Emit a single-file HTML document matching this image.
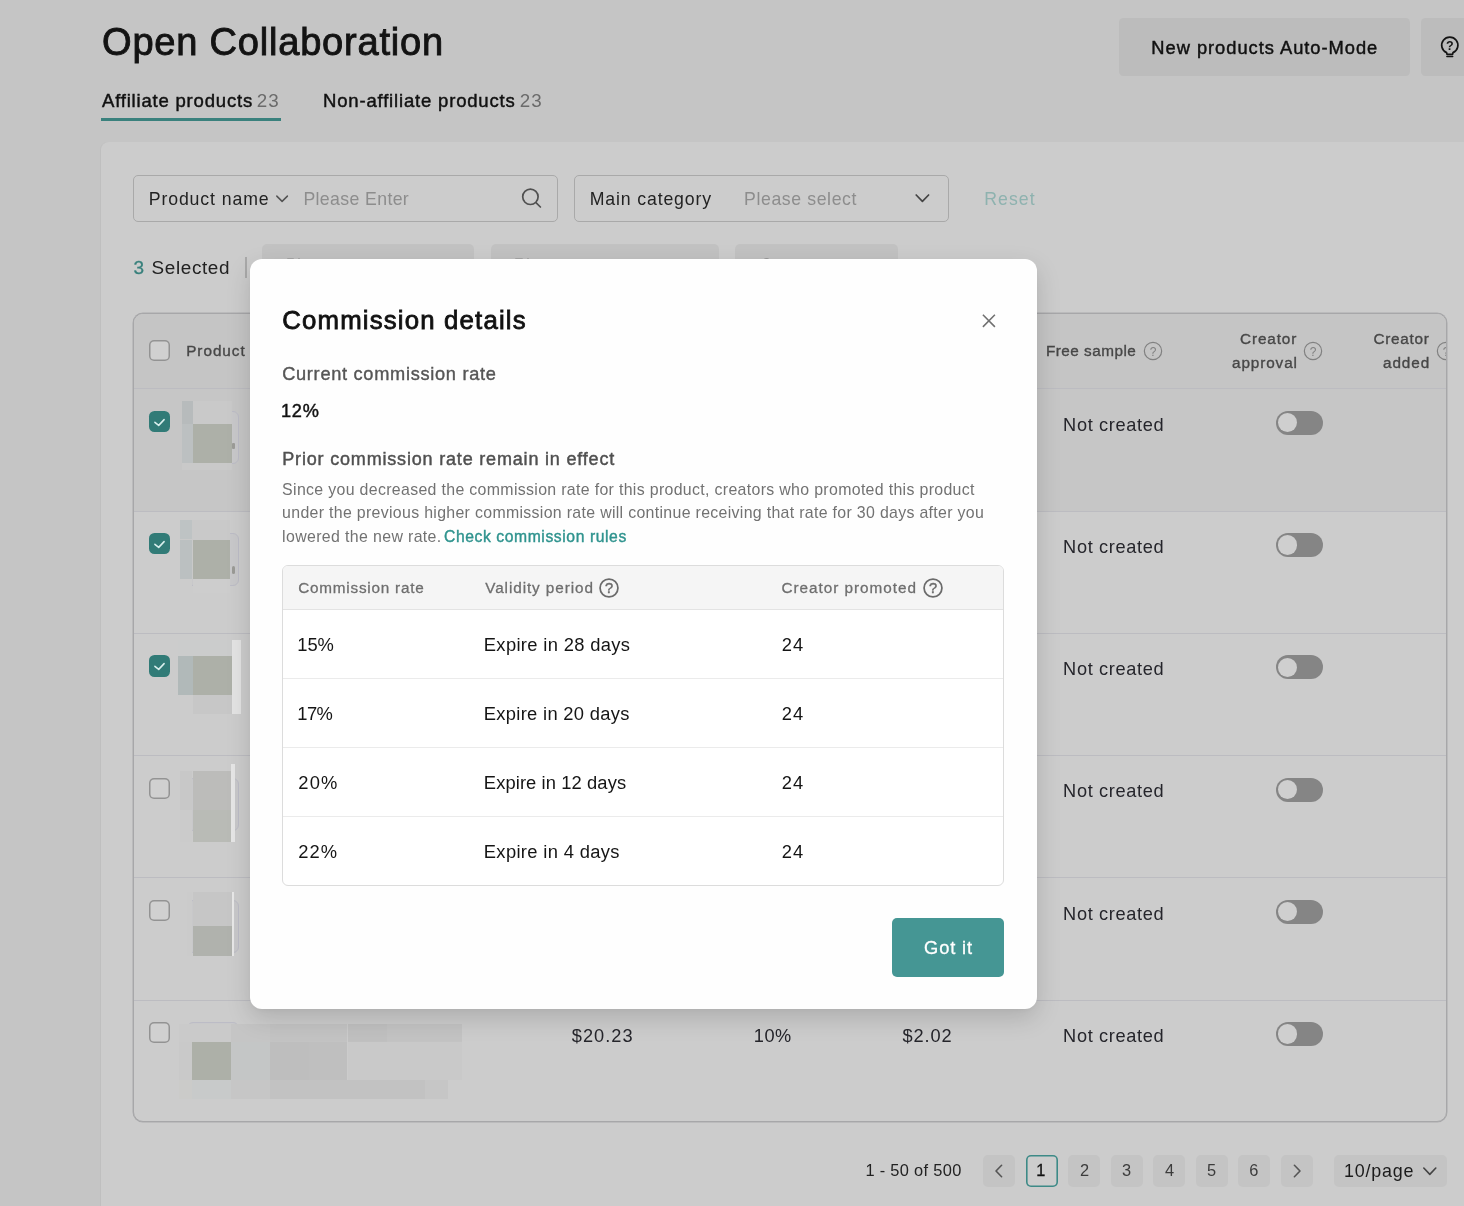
<!DOCTYPE html>
<html lang="en"><head><meta charset="utf-8"><title>Open Collaboration</title>
<style>
html,body{margin:0;padding:0}
body{width:1464px;height:1206px;overflow:hidden;position:relative;background:#c5c5c5;font-family:"Liberation Sans",Arial,sans-serif}
.a{position:absolute;box-sizing:border-box}
.t{position:absolute;white-space:nowrap;font-kerning:normal}
svg{position:absolute;overflow:visible}
.page{position:absolute;left:0;top:0;width:1464px;height:1206px;overflow:hidden;will-change:transform}
.inp{border:1px solid #a9a9a9;border-radius:5px}
.dis{background:#c2c2c2;border-radius:5px}
.pg{background:#c4c4c4;border-radius:5px}
.cb{border-radius:5px;background:#d0d0d0;box-shadow:inset 0 0 0 1.5px #939393}
.cbc{background:#317b77;border-radius:5.5px}
.tg{background:#858585;border-radius:12px}
.kn{background:#cfcfcf;border-radius:50%}
.th{border:1px solid #bcbcc6;border-radius:6px;background:#c8c8ca}
.hl{height:1px;background:#bcbcc1}
</style></head>
<body>
<div class="page">
<div class="a" style="left:101.00px;top:142.20px;width:1400.00px;height:1100.00px;background:#cccccc;border-top-left-radius:8px;box-shadow:-1px 0 1px rgba(0,0,0,.03);"></div>
<div class="a" style="left:1119.30px;top:17.60px;width:290.40px;height:58.00px;background:#bcbcbc;border-radius:4.5px;"></div>
<div class="a" style="left:1420.70px;top:17.60px;width:80.00px;height:58.00px;background:#bcbcbc;border-radius:4.5px;"></div>
<svg style="left:1438px;top:32.1px" width="24" height="27" viewBox="0 0 24 27">
<path d="M8.6 20.6 A8.1 8.1 0 1 1 15 20.6 L14.6 22.3 L9 22.3 Z" fill="none" stroke="#141414" stroke-width="1.7" stroke-linejoin="round"/>
<path d="M8.9 24.6 L14.7 24.6" stroke="#141414" stroke-width="1.5" stroke-linecap="round"/>
<text x="11.8" y="17.6" font-size="12.5" font-weight="700" text-anchor="middle" fill="#141414" font-family="Liberation Sans, Arial, sans-serif">?</text>
</svg>
<div class="a" style="left:101.00px;top:118.20px;width:180.00px;height:3.00px;background:#3a817d;"></div>
<div class="a inp" style="left:133px;top:174.5px;width:425px;height:47.5px"></div>
<div class="a inp" style="left:574px;top:174.5px;width:374.5px;height:47.5px"></div>
<svg style="left:270px;top:188px" width="24" height="20" viewBox="0 0 24 20"><path d="M6.8 8.1 L12.1 13.4 L17.4 8.1" fill="none" stroke="#525252" stroke-width="1.5" stroke-linecap="round" stroke-linejoin="round"/></svg>
<svg style="left:910px;top:188px" width="24" height="20" viewBox="0 0 24 20"><path d="M6.2 7 L12.4 13.4 L18.6 7" fill="none" stroke="#444" stroke-width="1.7" stroke-linecap="round" stroke-linejoin="round"/></svg>
<svg style="left:518px;top:184px" width="26" height="26" viewBox="0 0 26 26"><circle cx="12.4" cy="12.8" r="7.7" fill="none" stroke="#505050" stroke-width="1.7"/><path d="M18.2 18.8 L22.4 23" stroke="#505050" stroke-width="1.7" stroke-linecap="round"/></svg>
<div class="a" style="left:245.00px;top:257.00px;width:2.00px;height:20.50px;background:#a9a9a9;"></div>
<div class="a dis" style="left:262px;top:243.8px;width:212.3px;height:47px"></div>
<div class="a dis" style="left:490.5px;top:243.8px;width:228.5px;height:47px"></div>
<div class="a dis" style="left:735.2px;top:243.8px;width:162.8px;height:47px"></div>
<div class="a" style="left:286.80px;top:257.90px;width:7.30px;height:3.00px;background:#a6a6a6;border-radius:1px 1px 0 0;"></div>
<div class="a" style="left:298.00px;top:257.90px;width:2.10px;height:3.00px;background:#a9a9a9;"></div>
<div class="a" style="left:515.30px;top:257.90px;width:7.30px;height:3.00px;background:#a6a6a6;border-radius:1px 1px 0 0;"></div>
<div class="a" style="left:526.50px;top:257.90px;width:2.10px;height:3.00px;background:#a9a9a9;"></div>
<div class="a" style="left:763.20px;top:257.80px;width:7.00px;height:6.00px;background:#979797;border-radius:3.5px 3.5px 0 0;"></div>
<div class="a" style="left:133px;top:313px;width:1314px;height:809px;border:1px solid #a7a7a9;box-shadow:0 0 0 .5px #a9a9ab;border-radius:10px;overflow:hidden;background:#cccccc">
<div class="a" style="left:-134px;top:-314px;width:1464px;height:1206px">
<div class="a" style="left:134.00px;top:313.00px;width:1314.00px;height:76.00px;background:#c5c5c5;"></div>
<div class="a" style="left:134.00px;top:388.50px;width:1314.00px;height:122.25px;background:#c6c6c6;"></div>
<div class="a hl" style="left:134px;top:388.25px;width:1314px"></div>
<div class="a hl" style="left:134px;top:510.50px;width:1314px"></div>
<div class="a hl" style="left:134px;top:632.75px;width:1314px"></div>
<div class="a hl" style="left:134px;top:755.00px;width:1314px"></div>
<div class="a hl" style="left:134px;top:877.25px;width:1314px"></div>
<div class="a hl" style="left:134px;top:999.50px;width:1314px"></div>
<div class="a cb" style="left:149.1px;top:340.4px;width:21px;height:21px"></div>
<svg style="left:1141.20px;top:338.90px" width="24" height="24" viewBox="0 0 24 24"><circle cx="12" cy="12" r="8.65" fill="none" stroke="#818181" stroke-width="1.2"/><text x="12" y="17.15" font-size="12" font-weight="400" text-anchor="middle" fill="#818181" stroke="#818181" stroke-width="0" font-family="Liberation Sans, Arial, sans-serif">?</text></svg>
<svg style="left:1300.50px;top:338.90px" width="24" height="24" viewBox="0 0 24 24"><circle cx="12" cy="12" r="8.65" fill="none" stroke="#818181" stroke-width="1.2"/><text x="12" y="17.15" font-size="12" font-weight="400" text-anchor="middle" fill="#818181" stroke="#818181" stroke-width="0" font-family="Liberation Sans, Arial, sans-serif">?</text></svg>
<svg style="left:1433.80px;top:338.90px" width="24" height="24" viewBox="0 0 24 24"><circle cx="12" cy="12" r="8.65" fill="none" stroke="#818181" stroke-width="1.2"/><text x="12" y="17.15" font-size="12" font-weight="400" text-anchor="middle" fill="#818181" stroke="#818181" stroke-width="0" font-family="Liberation Sans, Arial, sans-serif">?</text></svg>
<div class="a cbc" style="left:149.1px;top:410.90px;width:21px;height:21.2px"></div>
<svg style="left:149.1px;top:410.90px" width="21" height="21" viewBox="0 0 21 21"><path d="M5.9 11.3 L9.7 14.4 L15.1 8.6" fill="none" stroke="#d9efed" stroke-width="1.55" stroke-linecap="round" stroke-linejoin="round"/></svg>
<div class="a th" style="left:186.5px;top:411.00px;width:52.5px;height:52.8px"></div>
<div class="a tg" style="left:1275.7px;top:410.80px;width:47.8px;height:24px"></div>
<div class="a kn" style="left:1277.9px;top:413.10px;width:19.3px;height:19.3px"></div>
<div class="a cbc" style="left:149.1px;top:533.15px;width:21px;height:21.2px"></div>
<svg style="left:149.1px;top:533.15px" width="21" height="21" viewBox="0 0 21 21"><path d="M5.9 11.3 L9.7 14.4 L15.1 8.6" fill="none" stroke="#d9efed" stroke-width="1.55" stroke-linecap="round" stroke-linejoin="round"/></svg>
<div class="a th" style="left:186.5px;top:533.25px;width:52.5px;height:52.8px"></div>
<div class="a tg" style="left:1275.7px;top:533.05px;width:47.8px;height:24px"></div>
<div class="a kn" style="left:1277.9px;top:535.35px;width:19.3px;height:19.3px"></div>
<div class="a cbc" style="left:149.1px;top:655.40px;width:21px;height:21.2px"></div>
<svg style="left:149.1px;top:655.40px" width="21" height="21" viewBox="0 0 21 21"><path d="M5.9 11.3 L9.7 14.4 L15.1 8.6" fill="none" stroke="#d9efed" stroke-width="1.55" stroke-linecap="round" stroke-linejoin="round"/></svg>
<div class="a th" style="left:186.5px;top:655.50px;width:52.5px;height:52.8px"></div>
<div class="a tg" style="left:1275.7px;top:655.30px;width:47.8px;height:24px"></div>
<div class="a kn" style="left:1277.9px;top:657.60px;width:19.3px;height:19.3px"></div>
<div class="a cb" style="left:149.1px;top:778.15px;width:21px;height:21px"></div>
<div class="a th" style="left:186.5px;top:777.75px;width:52.5px;height:52.8px"></div>
<div class="a tg" style="left:1275.7px;top:777.55px;width:47.8px;height:24px"></div>
<div class="a kn" style="left:1277.9px;top:779.85px;width:19.3px;height:19.3px"></div>
<div class="a cb" style="left:149.1px;top:900.40px;width:21px;height:21px"></div>
<div class="a th" style="left:186.5px;top:900.00px;width:52.5px;height:52.8px"></div>
<div class="a tg" style="left:1275.7px;top:899.80px;width:47.8px;height:24px"></div>
<div class="a kn" style="left:1277.9px;top:902.10px;width:19.3px;height:19.3px"></div>
<div class="a cb" style="left:149.1px;top:1022.45px;width:21px;height:21px"></div>
<div class="a th" style="left:186.5px;top:1022.25px;width:52.5px;height:52.8px"></div>
<div class="a tg" style="left:1275.7px;top:1022.05px;width:47.8px;height:24px"></div>
<div class="a kn" style="left:1277.9px;top:1024.35px;width:19.3px;height:19.3px"></div>
<div class="a" style="left:232.30px;top:443.30px;width:2.40px;height:5.60px;background:#9c9c98;border-radius:1px;"></div>
<div class="a" style="left:231.50px;top:565.50px;width:3.50px;height:8.00px;background:#9a9a96;border-radius:2px;"></div>
<div class="a" style="left:182.00px;top:401.00px;width:50.00px;height:68.60px;background:#c9c9c9;"></div>
<div class="a" style="left:182.00px;top:401.00px;width:11.00px;height:23.00px;background:#b7bbbc;"></div>
<div class="a" style="left:182.00px;top:424.00px;width:11.00px;height:39.00px;background:#bcc0c1;"></div>
<div class="a" style="left:193.00px;top:424.00px;width:39.00px;height:39.00px;background:#adb0a8;"></div>
<div class="a" style="left:180.10px;top:520.20px;width:49.90px;height:58.80px;background:#c9c9c9;"></div>
<div class="a" style="left:180.10px;top:579.00px;width:12.40px;height:13.70px;background:#cccccc;"></div>
<div class="a" style="left:192.50px;top:579.00px;width:37.50px;height:13.70px;background:#cdcdcd;"></div>
<div class="a" style="left:180.10px;top:520.20px;width:12.40px;height:19.30px;background:#bec3c4;"></div>
<div class="a" style="left:180.10px;top:539.50px;width:12.40px;height:39.20px;background:#bbc0c1;"></div>
<div class="a" style="left:192.50px;top:539.50px;width:37.50px;height:39.20px;background:#adb0a8;"></div>
<div class="a" style="left:178.00px;top:639.80px;width:54.00px;height:16.20px;background:#cbcccc;"></div>
<div class="a" style="left:178.00px;top:694.50px;width:14.50px;height:19.30px;background:#cccccc;"></div>
<div class="a" style="left:192.50px;top:694.50px;width:39.50px;height:19.30px;background:#c7c7c7;"></div>
<div class="a" style="left:178.00px;top:656.00px;width:14.50px;height:38.50px;background:#b1b9b9;"></div>
<div class="a" style="left:192.50px;top:656.00px;width:39.50px;height:38.50px;background:#adb0a8;"></div>
<div class="a" style="left:231.90px;top:639.80px;width:9.10px;height:74.10px;background:#e3e3e3;"></div>
<div class="a" style="left:180.10px;top:771.00px;width:12.40px;height:38.70px;background:#c8c8c8;"></div>
<div class="a" style="left:180.10px;top:809.70px;width:12.40px;height:32.20px;background:#cbcbcb;"></div>
<div class="a" style="left:192.50px;top:771.00px;width:38.50px;height:38.70px;background:#bcbcba;"></div>
<div class="a" style="left:192.50px;top:809.70px;width:38.50px;height:32.20px;background:#b9bbb6;"></div>
<div class="a" style="left:231.00px;top:763.90px;width:4.10px;height:78.00px;background:#e6e6e6;"></div>
<div class="a" style="left:187.10px;top:892.20px;width:5.40px;height:63.60px;background:#cbcbcb;"></div>
<div class="a" style="left:192.50px;top:892.20px;width:39.70px;height:33.50px;background:#c6c6c6;"></div>
<div class="a" style="left:192.50px;top:925.70px;width:39.70px;height:30.10px;background:#b0b2ad;"></div>
<div class="a" style="left:232.20px;top:892.20px;width:1.80px;height:63.60px;background:#e8e8e8;"></div>
<div class="a" style="left:178.50px;top:1023.70px;width:52.40px;height:17.90px;background:#cacaca;"></div>
<div class="a" style="left:230.90px;top:1023.70px;width:39.00px;height:17.90px;background:#c5c5c5;"></div>
<div class="a" style="left:269.90px;top:1023.70px;width:77.60px;height:17.90px;background:#c3c3c3;"></div>
<div class="a" style="left:347.50px;top:1023.70px;width:39.00px;height:17.90px;background:#c0c0c0;"></div>
<div class="a" style="left:386.50px;top:1023.70px;width:75.30px;height:17.90px;background:#c3c3c3;"></div>
<div class="a" style="left:178.50px;top:1041.60px;width:13.70px;height:38.70px;background:#c9c9c9;"></div>
<div class="a" style="left:192.20px;top:1041.60px;width:38.70px;height:38.70px;background:#adb0a8;"></div>
<div class="a" style="left:230.90px;top:1041.60px;width:39.00px;height:38.70px;background:#c4c6c6;"></div>
<div class="a" style="left:269.90px;top:1041.60px;width:38.90px;height:38.70px;background:#bebebe;"></div>
<div class="a" style="left:308.80px;top:1041.60px;width:38.70px;height:38.70px;background:#bfbfbf;"></div>
<div class="a" style="left:347.50px;top:1041.60px;width:114.30px;height:38.70px;background:#c9c9c9;"></div>
<div class="a" style="left:178.50px;top:1080.30px;width:13.70px;height:19.20px;background:#cbcbc9;"></div>
<div class="a" style="left:192.20px;top:1080.30px;width:38.70px;height:19.20px;background:#c8caca;"></div>
<div class="a" style="left:230.90px;top:1080.30px;width:39.00px;height:19.20px;background:#c6c6c6;"></div>
<div class="a" style="left:269.90px;top:1080.30px;width:155.30px;height:19.20px;background:#c2c2c2;"></div>
<div class="a" style="left:425.20px;top:1080.30px;width:22.80px;height:19.20px;background:#c6c6c6;"></div>
</div></div>
<div class="a pg" style="left:983.25px;top:1155px;width:31.8px;height:31.6px"></div>
<div class="a pg" style="left:1068.25px;top:1155px;width:31.8px;height:31.6px"></div>
<div class="a pg" style="left:1110.75px;top:1155px;width:31.8px;height:31.6px"></div>
<div class="a pg" style="left:1153.25px;top:1155px;width:31.8px;height:31.6px"></div>
<div class="a pg" style="left:1195.75px;top:1155px;width:31.8px;height:31.6px"></div>
<div class="a pg" style="left:1238.25px;top:1155px;width:31.8px;height:31.6px"></div>
<div class="a pg" style="left:1280.75px;top:1155px;width:31.8px;height:31.6px"></div>
<div class="a" style="left:1025.75px;top:1155px;width:32.2px;height:31.6px;box-shadow:inset 0 0 0 1.6px #3d8a87;border-radius:5px;background:#cdcdcd"></div>
<div class="a pg" style="left:1334.2px;top:1154.8px;width:112.9px;height:31.8px"></div>
<svg style="left:987px;top:1159px" width="24" height="24" viewBox="0 0 24 24"><path d="M14.6 6.3 L9 12 L14.6 17.7" fill="none" stroke="#555" stroke-width="1.6" stroke-linecap="round" stroke-linejoin="round"/></svg>
<svg style="left:1284.6px;top:1159px" width="24" height="24" viewBox="0 0 24 24"><path d="M9.4 6.3 L15 12 L9.4 17.7" fill="none" stroke="#555" stroke-width="1.6" stroke-linecap="round" stroke-linejoin="round"/></svg>
<svg style="left:1418px;top:1160px" width="24" height="24" viewBox="0 0 24 24"><path d="M5.8 8 L11.8 14.4 L17.8 8" fill="none" stroke="#444" stroke-width="1.6" stroke-linecap="round" stroke-linejoin="round"/></svg>
<span class="t" style="left:102.00px;top:17.00px;font-size:38.1px;line-height:50px;color:#131313;-webkit-text-stroke:0.9px #131313;letter-spacing:0.765px;">Open Collaboration</span>
<span class="t" style="left:102.00px;top:89.00px;font-size:18.55px;line-height:24px;color:#111;-webkit-text-stroke:0.45px #111;letter-spacing:0.794px;">Affiliate products</span>
<span class="t" style="left:256.75px;top:89.00px;font-size:18.8px;line-height:24px;color:#6b6b6b;letter-spacing:1.128px;">23</span>
<span class="t" style="left:323.00px;top:89.00px;font-size:18.55px;line-height:24px;color:#111;-webkit-text-stroke:0.45px #111;letter-spacing:0.810px;">Non-affiliate products</span>
<span class="t" style="left:519.75px;top:89.00px;font-size:18.8px;line-height:24px;color:#6b6b6b;letter-spacing:1.128px;">23</span>
<span class="t" style="left:1151.30px;top:36.00px;font-size:18.3px;line-height:24px;color:#111;-webkit-text-stroke:0.45px #111;letter-spacing:0.986px;">New products Auto-Mode</span>
<span class="t" style="left:148.70px;top:188.00px;font-size:17.7px;line-height:23px;color:#222;letter-spacing:0.891px;">Product name</span>
<span class="t" style="left:303.40px;top:188.00px;font-size:17.7px;line-height:23px;color:#8d8d8d;letter-spacing:0.373px;">Please Enter</span>
<span class="t" style="left:589.70px;top:188.00px;font-size:17.7px;line-height:23px;color:#222;letter-spacing:0.858px;">Main category</span>
<span class="t" style="left:744.00px;top:188.00px;font-size:17.7px;line-height:23px;color:#8d8d8d;letter-spacing:0.604px;">Please select</span>
<span class="t" style="left:984.20px;top:188.00px;font-size:17.7px;line-height:23px;color:#8eb2af;letter-spacing:1.062px;">Reset</span>
<span class="t" style="left:133.62px;top:255.00px;font-size:19px;line-height:25px;color:#38807c;-webkit-text-stroke:0.3px #38807c;">3</span>
<span class="t" style="left:151.50px;top:255.00px;font-size:18.9px;line-height:25px;color:#222;letter-spacing:0.643px;">Selected</span>
<span class="t" style="left:310.00px;top:258.00px;font-size:17.7px;line-height:23px;color:#9a9a9a;letter-spacing:-1.263px;">Edit commission rate</span>
<span class="t" style="left:538.00px;top:258.00px;font-size:17.7px;line-height:23px;color:#9a9a9a;letter-spacing:-0.105px;">Edit sample settings</span>
<span class="t" style="left:783.00px;top:258.00px;font-size:17.7px;line-height:23px;color:#9a9a9a;letter-spacing:-0.727px;">Set approval</span>
<span class="t" style="left:186.20px;top:341.00px;font-size:15.3px;line-height:20px;color:#474747;-webkit-text-stroke:0.35px #474747;letter-spacing:0.967px;">Product</span>
<span class="t" style="left:1045.90px;top:341.00px;font-size:15.3px;line-height:20px;color:#474747;-webkit-text-stroke:0.35px #474747;letter-spacing:0.490px;">Free sample</span>
<span class="t" style="left:1240.00px;top:329.00px;font-size:15.3px;line-height:20px;color:#474747;-webkit-text-stroke:0.35px #474747;letter-spacing:0.883px;">Creator</span>
<span class="t" style="left:1232.00px;top:353.00px;font-size:15.3px;line-height:20px;color:#474747;-webkit-text-stroke:0.35px #474747;letter-spacing:0.900px;">approval</span>
<span class="t" style="left:1373.50px;top:329.00px;font-size:15.3px;line-height:20px;color:#474747;-webkit-text-stroke:0.35px #474747;letter-spacing:0.733px;">Creator</span>
<span class="t" style="left:1383.00px;top:353.00px;font-size:15.3px;line-height:20px;color:#474747;-webkit-text-stroke:0.35px #474747;letter-spacing:0.918px;">added</span>
<span class="t" style="left:1063.10px;top:413.00px;font-size:18.2px;line-height:24px;color:#25252b;letter-spacing:0.650px;">Not created</span>
<span class="t" style="left:1063.10px;top:535.00px;font-size:18.2px;line-height:24px;color:#25252b;letter-spacing:0.650px;">Not created</span>
<span class="t" style="left:1063.10px;top:657.00px;font-size:18.2px;line-height:24px;color:#25252b;letter-spacing:0.650px;">Not created</span>
<span class="t" style="left:1063.10px;top:779.00px;font-size:18.2px;line-height:24px;color:#25252b;letter-spacing:0.650px;">Not created</span>
<span class="t" style="left:1063.10px;top:902.00px;font-size:18.2px;line-height:24px;color:#25252b;letter-spacing:0.650px;">Not created</span>
<span class="t" style="left:1063.10px;top:1024.00px;font-size:18.2px;line-height:24px;color:#25252b;letter-spacing:0.650px;">Not created</span>
<span class="t" style="left:571.80px;top:1024.00px;font-size:18.2px;line-height:24px;color:#25252b;letter-spacing:1.040px;">$20.23</span>
<span class="t" style="left:753.80px;top:1024.00px;font-size:18.2px;line-height:24px;color:#25252b;letter-spacing:0.500px;">10%</span>
<span class="t" style="left:902.50px;top:1024.00px;font-size:18.2px;line-height:24px;color:#25252b;letter-spacing:0.875px;">$2.02</span>
<span class="t" style="left:865.40px;top:1160.00px;font-size:16.4px;line-height:21px;color:#222;letter-spacing:0.321px;">1 - 50 of 500</span>
<span class="t" style="left:1344.10px;top:1160.00px;font-size:17.9px;line-height:23px;color:#1b1b1b;letter-spacing:0.783px;">10/page</span>
<span class="t" style="left:1036.25px;top:1160.00px;font-size:16.3px;line-height:21px;color:#111;-webkit-text-stroke:0.3px #111;">1</span>
<span class="t" style="left:1079.88px;top:1160.00px;font-size:16.4px;line-height:21px;color:#3c3c3c;">2</span>
<span class="t" style="left:1121.88px;top:1160.00px;font-size:16.4px;line-height:21px;color:#3c3c3c;">3</span>
<span class="t" style="left:1164.88px;top:1160.00px;font-size:16.4px;line-height:21px;color:#3c3c3c;">4</span>
<span class="t" style="left:1206.90px;top:1160.00px;font-size:16.4px;line-height:21px;color:#3c3c3c;">5</span>
<span class="t" style="left:1249.20px;top:1160.00px;font-size:16.4px;line-height:21px;color:#3c3c3c;">6</span>
</div>
<div class="page">
<div class="a" style="left:250px;top:259.3px;width:787px;height:749.5px;background:#fefefe;border-radius:12px;box-shadow:0 9px 24px rgba(0,0,0,.15),0 2px 5px rgba(0,0,0,.03)"></div>
<div class="a" style="left:282px;top:565px;width:722.4px;height:320.8px;border:1px solid #dcdcdc;border-radius:6px;overflow:hidden;background:#fff"><div class="a" style="left:0;top:0;width:722px;height:43.6px;background:#f5f5f5;border-bottom:1px solid #e3e3e3"></div><div class="a" style="left:0;top:112.2px;width:722px;height:1px;background:#ebebeb"></div><div class="a" style="left:0;top:181.2px;width:722px;height:1px;background:#ebebeb"></div><div class="a" style="left:0;top:250.2px;width:722px;height:1px;background:#ebebeb"></div></div>
<svg style="left:596.85px;top:575.60px" width="24" height="24" viewBox="0 0 24 24"><circle cx="12" cy="12" r="8.93" fill="none" stroke="#6b6b6b" stroke-width="1.75"/><text x="12" y="17.4" font-size="14.6" font-weight="400" text-anchor="middle" fill="#6b6b6b" stroke="#6b6b6b" stroke-width="0.45" font-family="Liberation Sans, Arial, sans-serif">?</text></svg>
<svg style="left:921.00px;top:575.60px" width="24" height="24" viewBox="0 0 24 24"><circle cx="12" cy="12" r="8.93" fill="none" stroke="#6b6b6b" stroke-width="1.75"/><text x="12" y="17.4" font-size="14.6" font-weight="400" text-anchor="middle" fill="#6b6b6b" stroke="#6b6b6b" stroke-width="0.45" font-family="Liberation Sans, Arial, sans-serif">?</text></svg>
<svg style="left:976.7px;top:308.5px" width="24" height="24" viewBox="0 0 24 24"><path d="M5.9 5.8 L17.9 17.9 M17.9 5.8 L5.9 17.9" fill="none" stroke="#707070" stroke-width="1.55" stroke-linecap="butt"/></svg>
<div class="a" style="left:892px;top:918.2px;width:112.1px;height:58.5px;background:#459694;border-radius:5px"></div>
<span class="t" style="left:282.20px;top:303.00px;font-size:25.8px;line-height:34px;color:#111;-webkit-text-stroke:0.8px #111;letter-spacing:1.165px;">Commission details</span>
<span class="t" style="left:282.20px;top:362.00px;font-size:18.2px;line-height:24px;color:#565656;-webkit-text-stroke:0.4px #565656;letter-spacing:0.707px;">Current commission rate</span>
<span class="t" style="left:281.02px;top:399.00px;font-size:18.2px;line-height:24px;color:#111;-webkit-text-stroke:0.45px #111;letter-spacing:0.725px;">12%</span>
<span class="t" style="left:282.30px;top:448.00px;font-size:18.0px;line-height:23px;color:#505050;-webkit-text-stroke:0.45px #505050;letter-spacing:0.816px;">Prior commission rate remain in effect</span>
<span class="t" style="left:282.10px;top:479.00px;font-size:15.9px;line-height:21px;color:#727272;letter-spacing:0.329px;">Since you decreased the commission rate for this product, creators who promoted this product</span>
<span class="t" style="left:282.10px;top:502.00px;font-size:15.9px;line-height:21px;color:#727272;letter-spacing:0.317px;">under the previous higher commission rate will continue receiving that rate for 30 days after you</span>
<span class="t" style="left:282.10px;top:526.00px;font-size:15.9px;line-height:21px;color:#727272;letter-spacing:0.360px;">lowered the new rate.</span>
<span class="t" style="left:444.00px;top:527.00px;font-size:15.7px;line-height:20px;color:#2f938e;-webkit-text-stroke:0.4px #2f938e;letter-spacing:0.583px;">Check commission rules</span>
<span class="t" style="left:298.20px;top:578.00px;font-size:15.3px;line-height:20px;color:#6e6e6e;-webkit-text-stroke:0.28px #6e6e6e;letter-spacing:0.771px;">Commission rate</span>
<span class="t" style="left:485.20px;top:578.00px;font-size:15.3px;line-height:20px;color:#6e6e6e;-webkit-text-stroke:0.28px #6e6e6e;letter-spacing:0.914px;">Validity period</span>
<span class="t" style="left:781.50px;top:578.00px;font-size:15.3px;line-height:20px;color:#6e6e6e;-webkit-text-stroke:0.28px #6e6e6e;letter-spacing:0.967px;">Creator promoted</span>
<span class="t" style="left:297.27px;top:633.00px;font-size:18.35px;line-height:24px;color:#151515;letter-spacing:-0.025px;">15%</span>
<span class="t" style="left:483.80px;top:633.00px;font-size:18.35px;line-height:24px;color:#151515;letter-spacing:0.341px;">Expire in 28 days</span>
<span class="t" style="left:781.65px;top:633.00px;font-size:18.35px;line-height:24px;color:#151515;letter-spacing:1.101px;">24</span>
<span class="t" style="left:297.25px;top:702.00px;font-size:18.35px;line-height:24px;color:#151515;letter-spacing:-0.550px;">17%</span>
<span class="t" style="left:483.80px;top:702.00px;font-size:18.35px;line-height:24px;color:#151515;letter-spacing:0.306px;">Expire in 20 days</span>
<span class="t" style="left:781.65px;top:702.00px;font-size:18.35px;line-height:24px;color:#151515;letter-spacing:1.101px;">24</span>
<span class="t" style="left:298.35px;top:771.00px;font-size:18.35px;line-height:24px;color:#151515;letter-spacing:1.101px;">20%</span>
<span class="t" style="left:483.80px;top:771.00px;font-size:18.35px;line-height:24px;color:#151515;letter-spacing:0.100px;">Expire in 12 days</span>
<span class="t" style="left:781.65px;top:771.00px;font-size:18.35px;line-height:24px;color:#151515;letter-spacing:1.101px;">24</span>
<span class="t" style="left:298.25px;top:840.00px;font-size:18.35px;line-height:24px;color:#151515;letter-spacing:1.101px;">22%</span>
<span class="t" style="left:483.80px;top:840.00px;font-size:18.35px;line-height:24px;color:#151515;letter-spacing:0.340px;">Expire in 4 days</span>
<span class="t" style="left:781.65px;top:840.00px;font-size:18.35px;line-height:24px;color:#151515;letter-spacing:1.101px;">24</span>
<span class="t" style="left:924.10px;top:936.00px;font-size:18.3px;line-height:24px;color:#ffffff;-webkit-text-stroke:0.3px #ffffff;letter-spacing:0.840px;">Got it</span>
</div>
</body></html>
